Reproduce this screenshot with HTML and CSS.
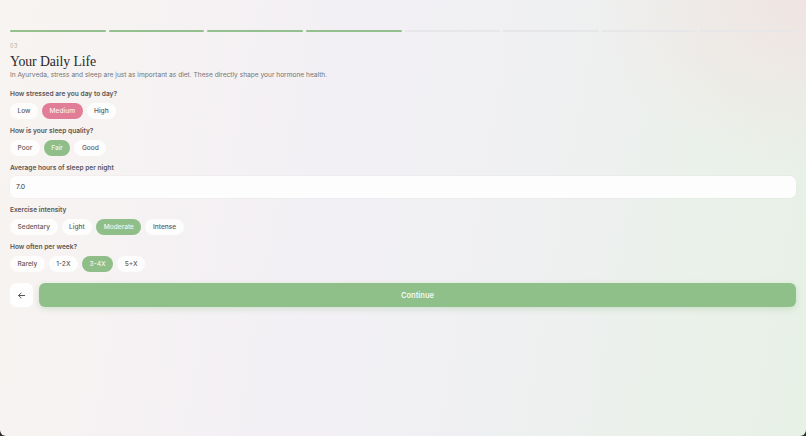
FILE: index.html
```html
<!DOCTYPE html>
<html lang="en">
<head>
<meta charset="utf-8">
<title>Your Daily Life</title>
<link rel="stylesheet" href="styles.css">
</head>
<body>
<div class="window">
  <div class="progress">
    <span class="seg done"></span><span class="seg done"></span><span class="seg done"></span><span class="seg done"></span>
    <span class="seg"></span><span class="seg"></span><span class="seg"></span><span class="seg"></span>
  </div>
  <div class="step">03</div>
  <h1 class="title">Your Daily Life</h1>
  <p class="sub">In Ayurveda, stress and sleep are just as important as diet. These directly shape your hormone health.</p>

  <div class="field first">
    <div class="label">How stressed are you day to day?</div>
    <div class="pills">
      <span class="pill">Low</span><span class="pill pink">Medium</span><span class="pill">High</span>
    </div>
  </div>

  <div class="field">
    <div class="label">How is your sleep quality?</div>
    <div class="pills">
      <span class="pill">Poor</span><span class="pill green">Fair</span><span class="pill">Good</span>
    </div>
  </div>

  <div class="field">
    <div class="label tight">Average hours of sleep per night</div>
    <div class="input">7.0</div>
  </div>

  <div class="field">
    <div class="label">Exercise intensity</div>
    <div class="pills">
      <span class="pill">Sedentary</span><span class="pill">Light</span><span class="pill green">Moderate</span><span class="pill">Intense</span>
    </div>
  </div>

  <div class="field">
    <div class="label">How often per week?</div>
    <div class="pills">
      <span class="pill">Rarely</span><span class="pill">1-2X</span><span class="pill green">3-4X</span><span class="pill">5+X</span>
    </div>
  </div>

  <div class="actions">
    <button class="back" aria-label="Back">
      <svg width="9" height="9" viewBox="0 0 10 10"><path d="M8.5 5H1.8M4.6 2.2L1.8 5l2.8 2.8" fill="none" stroke="#555" stroke-width="1.1" stroke-linecap="round" stroke-linejoin="round"/></svg>
    </button>
    <button class="continue">Continue</button>
  </div>
</div>
</body>
</html>
```
FILE: styles.css
```css
html, body {
  margin: 0;
  padding: 0;
  background: #2a2a2a;
}
body {
  width: 806px;
  height: 436px;
  overflow: hidden;
  font-family: Inter, "Noto Sans", sans-serif;
}
.window {
  box-sizing: border-box;
  width: 806px;
  height: 436px;
  border-radius: 0 0 6px 6px;
  padding: 30px 10px 0 10px;
  background:
    radial-gradient(ellipse 220px 170px at 100% 0%, rgba(242, 224, 224, 0.75), rgba(242, 224, 224, 0) 100%),
    linear-gradient(100deg, #f8f4f1 0%, #f3f0f5 40%, #eff0f1 65%, #e7f1e5 100%);
}
.progress {
  display: flex;
  gap: 3px;
  height: 2px;
}
.seg {
  flex: 1;
  background: #e7e6e9;
  border-radius: 1px;
}
.seg.done {
  background: #93c08e;
}
.step {
  margin-top: 11px;
  font-size: 5.5px;
  color: #a9b3a6;
  letter-spacing: 0.5px;
  line-height: 7px;
}
.title {
  margin: 3px 0 0 0;
  font-family: "Liberation Serif", "DejaVu Serif", serif;
  font-weight: 400;
  font-size: 13.8px;
  letter-spacing: -0.1px;
  line-height: 17px;
  color: #2a2929;
}
.sub {
  margin: 0;
  font-size: 6.6px;
  line-height: 10px;
  color: #757373;
}
.field {
  margin-top: 8px;
}
.field.first {
  margin-top: 10px;
}
.label {
  font-size: 6.6px;
  font-weight: 600;
  color: #5a5858;
  line-height: 9px;
  margin-bottom: 4px;
}
.label.tight {
  margin-bottom: 3px;
}
.pills {
  display: flex;
  gap: 4px;
}
.pill {
  height: 16px;
  line-height: 16px;
  padding: 0 7.5px;
  border-radius: 8px;
  background: rgba(255, 255, 255, 0.8);
  font-size: 6.6px;
  font-weight: 500;
  color: #5e5c5c;
}
.pill.pink {
  background: #e27d97;
  color: #fbeef1;
}
.pill.green {
  background: #8fbe89;
  color: #f1f7f0;
}
.input {
  box-sizing: border-box;
  height: 22px;
  line-height: 22px;
  padding: 0 6px;
  border-radius: 6px;
  background: #fdfdfd;
  font-size: 6.8px;
  color: #333;
  box-shadow: 0 0 0 0.5px rgba(0,0,0,0.03);
}
.actions {
  display: flex;
  gap: 6px;
  margin-top: 11px;
}
.back {
  width: 23px;
  height: 24px;
  border: none;
  border-radius: 6px;
  background: #fefefe;
  display: flex;
  align-items: center;
  justify-content: center;
  padding: 0;
}
.continue {
  flex: 1;
  height: 24px;
  border: none;
  border-radius: 6px;
  background: #8fc089;
  color: #f3f8f2;
  font-family: Inter, "Noto Sans", sans-serif;
  font-size: 7.5px;
  font-weight: 600;
  box-shadow: 0 2px 6px rgba(143, 192, 137, 0.35);
}
```
